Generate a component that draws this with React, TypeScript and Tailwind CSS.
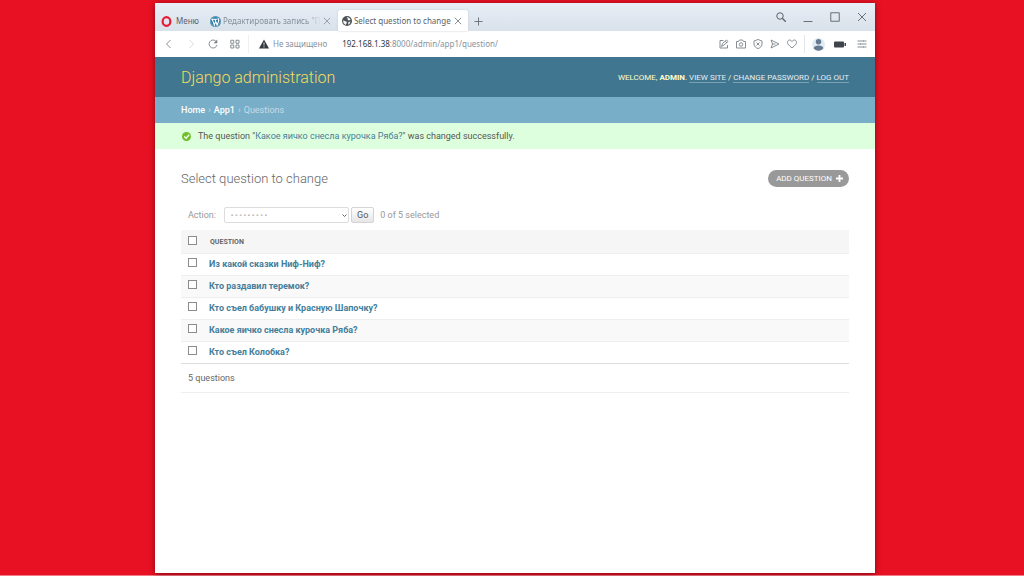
import type { ReactNode } from "react";

const questions = [
  "Из какой сказки Ниф-Ниф?",
  "Кто раздавил теремок?",
  "Кто съел бабушку и Красную Шапочку?",
  "Какое яичко снесла курочка Ряба?",
  "Кто съел Колобка?",
];

const checkboxClass =
  "block size-[9px] appearance-none border border-[#8c8c8c] bg-white checked:bg-[#417690]";

function Icon({ children, className = "size-[10px]" }: { children: ReactNode; className?: string }) {
  return (
    <svg
      viewBox="0 0 20 20"
      fill="none"
      stroke="currentColor"
      strokeWidth="1.8"
      className={`block shrink-0 ${className}`}
      aria-hidden="true"
    >
      {children}
    </svg>
  );
}

function CloseIcon({ className }: { className?: string }) {
  return (
    <Icon className={className}>
      <path d="M2 2 18 18M18 2 2 18" />
    </Icon>
  );
}

function WordpressIcon() {
  return (
    <svg viewBox="0 0 24 24" className="block size-[11px] shrink-0" aria-hidden="true">
      <circle cx="12" cy="12" r="12" fill="#2478a5" />
      <circle cx="12" cy="12" r="10.4" fill="none" stroke="#fff" strokeWidth="0.8" />
      <path
        d="M3 7h6M5 7.500 9.500 20 12.500 11.500M9 7h7M11 7.500 15.500 20 18.500 12C20 8.500 17 7 18 4.500"
        fill="none"
        stroke="#fff"
        strokeWidth="2.400"
      />
    </svg>
  );
}

function GlobeIcon() {
  return (
    <svg viewBox="0 0 20 20" className="block size-[10px] shrink-0" aria-hidden="true">
      <circle cx="10" cy="10" r="10" fill="#4b5157" />
      <path d="M11 2 16 5 17 8 13 9 11 7 12 5 9 4ZM2 9 6 10 10 12 9 15 7 18 3 14ZM13 12 17 11 15 16 12 17Z" fill="#f2f4f6" />
    </svg>
  );
}

function TabBar() {
  return (
    <div className="flex h-7 items-stretch bg-linear-to-b from-[#e7eef6] to-[#d9e1ea] pl-[6px] text-[8px] text-[#5b626a]">
      <button type="button" className="flex items-center gap-1 pt-2">
        <svg viewBox="0 0 20 20" className="block size-[11px]" aria-hidden="true">
          <ellipse cx="10" cy="10" rx="7" ry="8" fill="none" stroke="#e81b35" strokeWidth="4" />
        </svg>
        Меню
      </button>
      <div className="ml-[11px] flex w-[128px] items-center gap-[2px] pt-2">
        <WordpressIcon />
        <span className="min-w-0 flex-1 whitespace-nowrap mask-r-from-85% text-[#84909c]">
          Редактировать запись "Пр
        </span>
        <button type="button" aria-label="Close tab" className="mr-[7px] text-[#7d858d]">
          <CloseIcon className="size-2" />
        </button>
      </div>
      <div className="mt-[7px] flex w-[130px] items-center gap-[2px] rounded-t-[2px] bg-white px-1 shadow-[0_0_2px_#b9c4cf]">
        <GlobeIcon />
        <span className="min-w-0 flex-1 whitespace-nowrap">
          Select question to change
        </span>
        <button type="button" aria-label="Close tab" className="mx-[2px]">
          <CloseIcon className="size-2" />
        </button>
      </div>
      <button type="button" aria-label="New tab" className="ml-[6px] pt-2">
        <Icon className="size-[9px]">
          <path d="M10 1v18M1 10h18" />
        </Icon>
      </button>
      <div className="ml-auto flex items-center gap-[17px] pr-2">
        <button type="button" aria-label="Search">
          <Icon>
            <circle cx="8" cy="8" r="6.500" strokeWidth="2" />
            <path d="m12.500 12.500 7 7" strokeWidth="2.600" />
          </Icon>
        </button>
        <button type="button" aria-label="Minimize">
          <Icon>
            <path d="M1 19h18" />
          </Icon>
        </button>
        <button type="button" aria-label="Maximize">
          <Icon>
            <path d="M1.500 1.500h17v17h-17z" />
          </Icon>
        </button>
        <button type="button" aria-label="Close window">
          <CloseIcon className="size-[10px]" />
        </button>
      </div>
    </div>
  );
}

function AddressBar() {
  return (
    <div className="flex h-[26px] items-center bg-white text-[8px] text-[#7b8187]">
      <div className="flex items-center gap-3 pl-[9px]">
        <button type="button" aria-label="Back">
          <Icon>
            <path d="m13 2-8 8 8 8" />
          </Icon>
        </button>
        <button type="button" aria-label="Forward" className="text-[#d3d6d9]">
          <Icon>
            <path d="m7 2 8 8-8 8" />
          </Icon>
        </button>
        <button type="button" aria-label="Reload">
          <Icon>
            <path d="M18 12A8 8 0 1 1 15.500 4" />
            <path d="M18.500 1v7.500h-7.500z" fill="currentColor" stroke="none" />
          </Icon>
        </button>
        <button type="button" aria-label="Speed dial">
          <Icon>
            <path d="M1.500 2.500h6v6h-6zM12 2.500h6v6h-6zM1.500 12h6v6h-6zM12 12h6v6h-6z" />
          </Icon>
        </button>
      </div>
      <span className="ml-2 h-[18px] w-px bg-[#eef0f2]" />
      <svg viewBox="0 0 20 20" className="ml-[10px] block size-[10px] shrink-0" aria-hidden="true">
        <path d="M10 1 20 19H0Z" fill="#33393f" />
        <path d="M10 7v6M10 14.500v2.500" stroke="#fff" strokeWidth="1.600" />
      </svg>
      <span className="ml-1 whitespace-nowrap text-[#8a939c]">Не защищено</span>
      <span className="ml-[15px] whitespace-nowrap text-[#8593a0]">
        <span className="text-[#30363c]">192.168.1.38</span>:8000/admin/app1/question/
      </span>
      <div className="ml-auto flex items-center gap-[7px] pr-2">
        <button type="button" aria-label="Edit page">
          <Icon>
            <path d="M9 3H2v15h15v-6M5 15l2-6 8-7 3 3-8 7-5 3M12 4l4 4" />
          </Icon>
        </button>
        <button type="button" aria-label="Snapshot">
          <Icon>
            <path d="M1 5h4l2-3h6l2 3h4v13H1z" />
            <circle cx="10" cy="11" r="3.500" />
          </Icon>
        </button>
        <button type="button" aria-label="Ad blocker">
          <Icon>
            <path d="M10 1 18 4v6c0 5-4 8-8 9-4-1-8-4-8-9V4zM7 7l6 6M13 7l-6 6" />
          </Icon>
        </button>
        <button type="button" aria-label="Send">
          <Icon>
            <path d="M2 2 18 10 2 18l3-8zM5 10h6" />
          </Icon>
        </button>
        <button type="button" aria-label="Bookmark">
          <Icon>
            <path d="M10 18C4 13 1 10 1 6.500 1 2 7 0 10 5c3-5 9-3 9 1.500C19 10 16 13 10 18Z" />
          </Icon>
        </button>
        <span className="h-[18px] w-px bg-[#e3e6e9]" />
        <button type="button" aria-label="Profile">
          <svg viewBox="0 0 24 24" className="block size-[13px]" aria-hidden="true">
            <circle cx="12" cy="12" r="12" fill="#e2ebf2" />
            <circle cx="12" cy="7" r="5" fill="#647b92" />
            <path d="M3 19c0-7 18-7 18 0-3 6-15 6-18 0Z" fill="#647b92" />
          </svg>
        </button>
        <button type="button" aria-label="Battery saver" className="ml-[2px]">
          <svg viewBox="0 0 24 14" className="block h-[7px] w-3" aria-hidden="true">
            <rect y="1" width="20" height="12" rx="2" fill="#3e444a" />
            <path d="M21 4h3v6h-3z" fill="#3e444a" />
          </svg>
        </button>
        <button type="button" aria-label="Easy setup" className="ml-1">
          <Icon>
            <path d="M1 4h11M15 4h4M1 10h4M8 10h11M1 16h11M15 16h4M13.500 2v4M6.500 8v4M13.500 14v4" />
          </Icon>
        </button>
      </div>
    </div>
  );
}

function SiteHeader() {
  const link = "border-b border-[#7aa0b3] text-[#e6eef2]";

  return (
    <header className="flex h-10 items-center justify-between bg-[#417690] px-[26px] pt-px text-[#ffc]">
      <h1 className="text-[16px] font-light whitespace-nowrap text-[#f5dd5d]">Django administration</h1>
      <nav className="text-[8px] leading-[9px] whitespace-nowrap uppercase">
        Welcome, <strong>admin</strong>.{" "}
        <a href="#site" className={link}>View site</a> /{" "}
        <a href="#password" className={link}>Change password</a> /{" "}
        <a href="#logout" className={link}>Log out</a>
      </nav>
    </header>
  );
}

function ActionBar() {
  return (
    <form
      className="mt-[17px] flex h-5 items-center pl-[7px] text-[#999]"
      onSubmit={(event) => event.preventDefault()}
    >
      <label htmlFor="action">Action:</label>
      <div className="relative ml-2">
        <select
          id="action"
          className="block h-4 w-[125px] appearance-none rounded-[2px] border border-[#ddd] bg-white pl-[5px] font-['DejaVu_Sans_Mono',monospace] text-[7px] leading-3 text-[#444]"
        >
          <option>---------</option>
          <option>Delete selected questions</option>
        </select>
        <svg viewBox="0 0 10 10" className="pointer-events-none absolute top-[6px] right-[2px] size-[5px]" aria-hidden="true">
          <path d="m1 3 4 4 4-4" fill="none" stroke="#666" strokeWidth="2" />
        </svg>
      </div>
      <button
        type="submit"
        className="ml-[2px] h-4 rounded-[2px] border border-[#d4d4d4] bg-linear-to-b from-white to-[#e6e6e6] px-[5px] leading-3 text-[#555]"
      >
        Go
      </button>
      <span className="ml-[6px]">0 of 5 selected</span>
    </form>
  );
}

function QuestionTable() {
  return (
    <table className="mt-[5px] w-full border-collapse text-left">
      <thead>
        <tr className="h-[23px] border-b border-[#eee] bg-[#f6f6f6]">
          <th className="w-7 pb-px pl-[7px]">
            <input type="checkbox" aria-label="Select all" className={checkboxClass} />
          </th>
          <th className="pt-px pl-px text-[7px] font-bold text-[#666] uppercase">Question</th>
        </tr>
      </thead>
      <tbody>
        {questions.map((question) => (
          <tr key={question} className="h-[22px] border-b border-[#eee] last:border-[#ddd] even:bg-[#f9f9f9]">
            <td className="pb-[3px] pl-[7px]">
              <input type="checkbox" aria-label={question} className={checkboxClass} />
            </td>
            <th className="font-bold">
              <a href="#question" className="text-[#447e9b]">{question}</a>
            </th>
          </tr>
        ))}
      </tbody>
    </table>
  );
}

export default function App() {
  return (
    <div className="flex min-h-screen flex-col border-b border-[#f47c86] bg-[#e81123] pt-[3px] pr-[149px] pb-[2px] pl-[155px]">
      <div className="flex flex-1 flex-col bg-white shadow-[0_1px_6px_rgba(0,0,0,0.45)]">
        <div className="font-['Noto_Sans','Open_Sans',sans-serif]">
          <TabBar />
          <AddressBar />
        </div>
        <div className="font-[Roboto,sans-serif] text-[9px] leading-3 text-[#555]">
          <SiteHeader />
          <nav aria-label="Breadcrumbs" className="flex h-[26px] items-center gap-[3px] bg-[#79aec8] px-[26px] text-[#c4dce8]">
            <a href="#home" className="font-medium text-white">Home</a>
            <span>›</span>
            <a href="#app1" className="font-medium text-white">App1</a>
            <span>›</span>
            <span>Questions</span>
          </nav>
          <div role="status" className="flex h-[26px] items-center gap-[7px] bg-[#dfd] px-[27px]">
            <svg viewBox="0 0 20 20" className="block size-[9px] shrink-0" aria-hidden="true">
              <circle cx="10" cy="10" r="10" fill="#70bf2b" />
              <path d="m5 10 4 4 7-8" fill="none" stroke="#fff" strokeWidth="3" />
            </svg>
            <p>
              The question "<a href="#question" className="text-[#447e9b]">Какое яичко снесла курочка Ряба?</a>" was
              changed successfully.
            </p>
          </div>
          <main className="px-[26px] pt-5">
            <div className="flex items-center justify-between">
              <h2 className="pt-px text-[13px] leading-[18px] font-light text-[#666]">Select question to change</h2>
              <a
                href="#add"
                className="flex h-[17px] items-center gap-1 rounded-full bg-[#999] pr-[6px] pl-2 text-[8px] text-white uppercase"
              >
                Add question
                <svg viewBox="0 0 10 10" className="block size-[7px]" aria-hidden="true">
                  <path d="M5 0v10M0 5h10" stroke="#fff" strokeWidth="2.600" />
                </svg>
              </a>
            </div>
            <ActionBar />
            <QuestionTable />
            <p className="flex h-[29px] items-center border-b border-[#eee] pl-[7px] text-[#666]">5 questions</p>
          </main>
        </div>
      </div>
    </div>
  );
}
